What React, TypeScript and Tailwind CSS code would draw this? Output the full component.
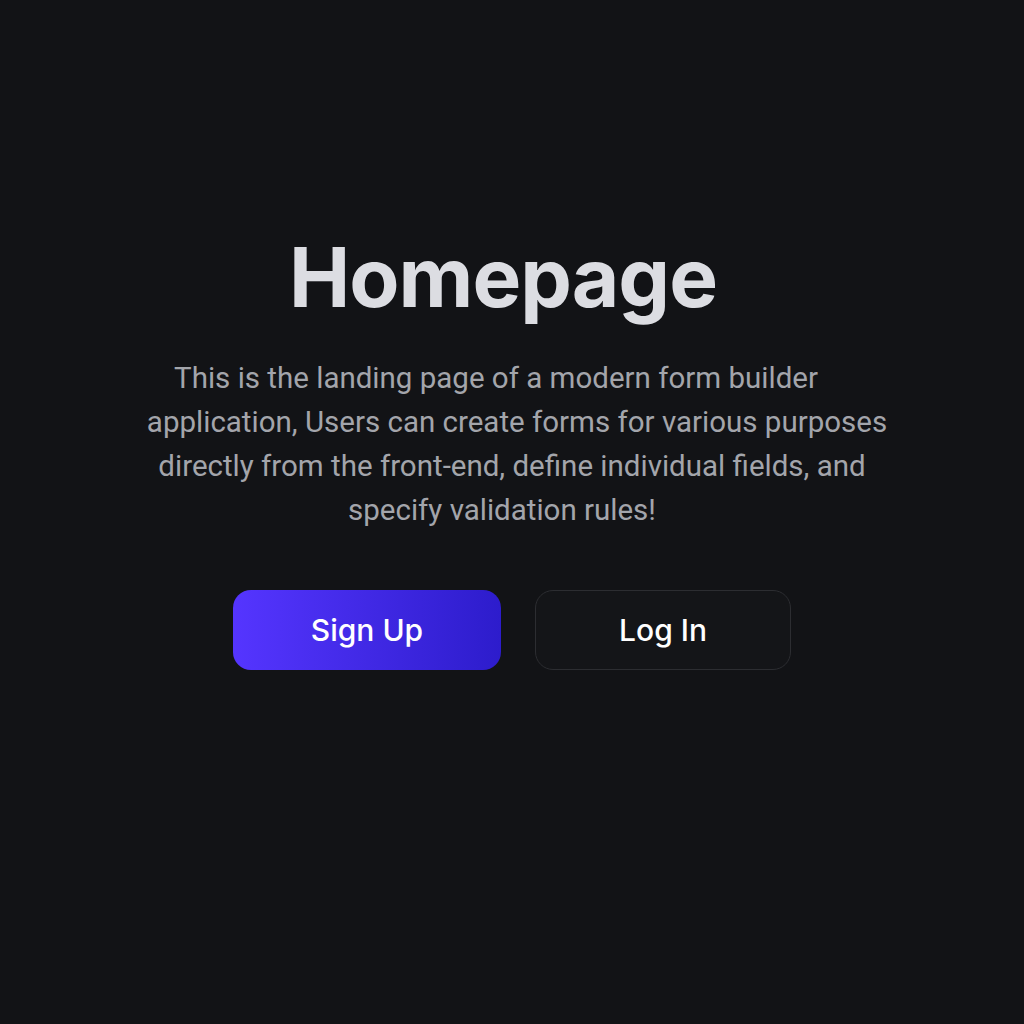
export default function App() {
  return (
    <div className="w-full h-[1024px] bg-[#121316] flex flex-col items-center" style={{ fontFamily: "Inter, 'Noto Sans', sans-serif" }}>
      <h1 className="mt-[228px] mr-[18px] text-[82px] leading-[100px] font-bold text-[#dcdde2] tracking-[-1px]">Homepage</h1>
      <p className="mt-[28px] w-[800px] text-center text-[29.5px] leading-[44px] text-[#a3a5ab]" style={{ fontFamily: "Roboto, Inter, sans-serif" }}>
        <span className="block pr-[32px]">This is the landing page of a modern form builder</span>
        <span className="block pl-[10px]">application, Users can create forms for various purposes</span>
        <span className="block">directly from the front-end, define individual fields, and</span>
        <span className="block pr-[20px]">specify validation rules!</span>
      </p>
      <div className="mt-[58px] flex gap-[34px]">
        <button className="w-[268px] h-[80px] rounded-[18px] bg-gradient-to-r from-[#5535ff] to-[#2d1ccc] text-white text-[30px] font-medium">Sign Up</button>
        <button className="w-[256px] h-[80px] rounded-[18px] bg-[#141518] border border-[#2c2d31] text-white text-[30px] font-medium">Log In</button>
      </div>
    </div>
  );
}
